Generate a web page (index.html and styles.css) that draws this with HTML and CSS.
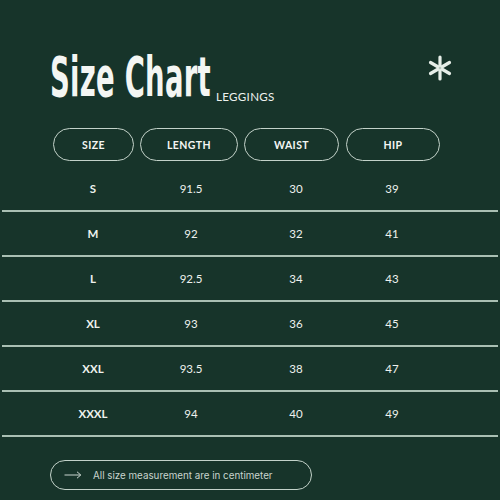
FILE: index.html
```html
<!DOCTYPE html>
<html>
<head>
<meta charset="utf-8">
<link rel="stylesheet" href="styles.css">
</head>
<body>
<div class="page">
  <header class="head">
    <div class="titlebox"><h1 class="title">Size Chart</h1></div>
    <span class="sub">LEGGINGS</span>
    <svg class="star" width="26" height="26" viewBox="-13 -13 26 26">
      <g stroke="#e6eee8" stroke-width="3.2" stroke-linecap="round">
        <line x1="0" y1="-11" x2="0" y2="11"/>
        <line x1="-9.5" y1="-5.5" x2="9.5" y2="5.5"/>
        <line x1="-9.5" y1="5.5" x2="9.5" y2="-5.5"/>
      </g>
      <circle r="1.3" fill="#b9c9bf"/>
    </svg>
  </header>
  <div class="pills">
    <div class="pill p1">SIZE</div>
    <div class="pill p2">LENGTH</div>
    <div class="pill p3">WAIST</div>
    <div class="pill p4">HIP</div>
  </div>
  <div class="rows">
    <div class="row"><span class="c1">S</span><span class="c2">91.5</span><span class="c3">30</span><span class="c4">39</span></div>
    <div class="row"><span class="c1">M</span><span class="c2">92</span><span class="c3">32</span><span class="c4">41</span></div>
    <div class="row"><span class="c1">L</span><span class="c2">92.5</span><span class="c3">34</span><span class="c4">43</span></div>
    <div class="row"><span class="c1">XL</span><span class="c2">93</span><span class="c3">36</span><span class="c4">45</span></div>
    <div class="row"><span class="c1">XXL</span><span class="c2">93.5</span><span class="c3">38</span><span class="c4">47</span></div>
    <div class="row"><span class="c1">XXXL</span><span class="c2">94</span><span class="c3">40</span><span class="c4">49</span></div>
  </div>
  <div class="note">
    <svg width="18" height="8" viewBox="0 0 18 8"><path d="M0.5 4H16.5M13 0.8L16.8 4L13 7.2" fill="none" stroke="#c9d4ce" stroke-width="1"/></svg>
    <span>All size measurement are in centimeter</span>
  </div>
</div>
</body>
</html>
```
FILE: styles.css
```css
html, body {
  margin: 0;
  padding: 0;
  background: #17342a;
}
.page {
  width: 500px;
  height: 500px;
  background: #17342a;
  color: #f2f5f2;
  font-family: Lato, "Open Sans", sans-serif;
  overflow: hidden;
}
.head {
  display: flex;
  align-items: flex-end;
  padding: 52px 0 0 50px;
  height: 50px;
  position: relative;
}
.titlebox {
  width: 166px;
  height: 50px;
}
.title {
  margin: 0;
  font-family: "DejaVu Sans Condensed", "DejaVu Sans", sans-serif;
  font-weight: 700;
  font-size: 56px;
  line-height: 50px;
  letter-spacing: 0.5px;
  color: #f4f6f3;
  transform: scaleX(0.545);
  transform-origin: left bottom;
  white-space: nowrap;
}
.sub {
  font-family: Lato, sans-serif;
  font-size: 11.6px;
  letter-spacing: 0.3px;
  color: #eef2ee;
  line-height: 12px;
  position: relative;
  top: 1px;
}
.star {
  position: absolute;
  left: 427px;
  top: 55px;
}
.pills {
  display: flex;
  padding: 26px 0 0 53px;
  height: 32px;
}
.pill {
  box-sizing: border-box;
  height: 33px;
  border: 1.5px solid #c3d2c9;
  border-radius: 17px;
  display: flex;
  align-items: center;
  justify-content: center;
  font-weight: 700;
  font-size: 10.5px;
  letter-spacing: 0.4px;
  color: #f4f6f3;
}
.p1 { width: 81px; }
.p2 { width: 98px; margin-left: 6px; }
.p3 { width: 95px; margin-left: 6px; }
.p4 { width: 94px; margin-left: 7px; }
.rows {
  margin-top: 7px;
}
.row {
  position: relative;
  height: 45px;
  border-bottom: 2px solid #a9bfb3;
  margin: 0 2px;
  box-sizing: border-box;
  font-size: 11.5px;
  color: #eef2ee;
}
.row span {
  position: absolute;
  top: 15px;
  transform: translateX(-50%);
  line-height: 14px;
}
.c1 { left: 91px; font-weight: 700; }
.c2 { left: 189px; }
.c3 { left: 294px; }
.c4 { left: 390px; }
.note {
  margin: 23px 0 0 50px;
  width: 262px;
  height: 30px;
  box-sizing: border-box;
  border: 1.5px solid #c3d2c9;
  border-radius: 15px;
  display: flex;
  align-items: center;
  padding-left: 13px;
  font-family: Inter, "Liberation Sans", sans-serif;
  font-size: 9.8px;
  color: #c9d4ce;
}
.note svg { margin-right: 11px; }
```
